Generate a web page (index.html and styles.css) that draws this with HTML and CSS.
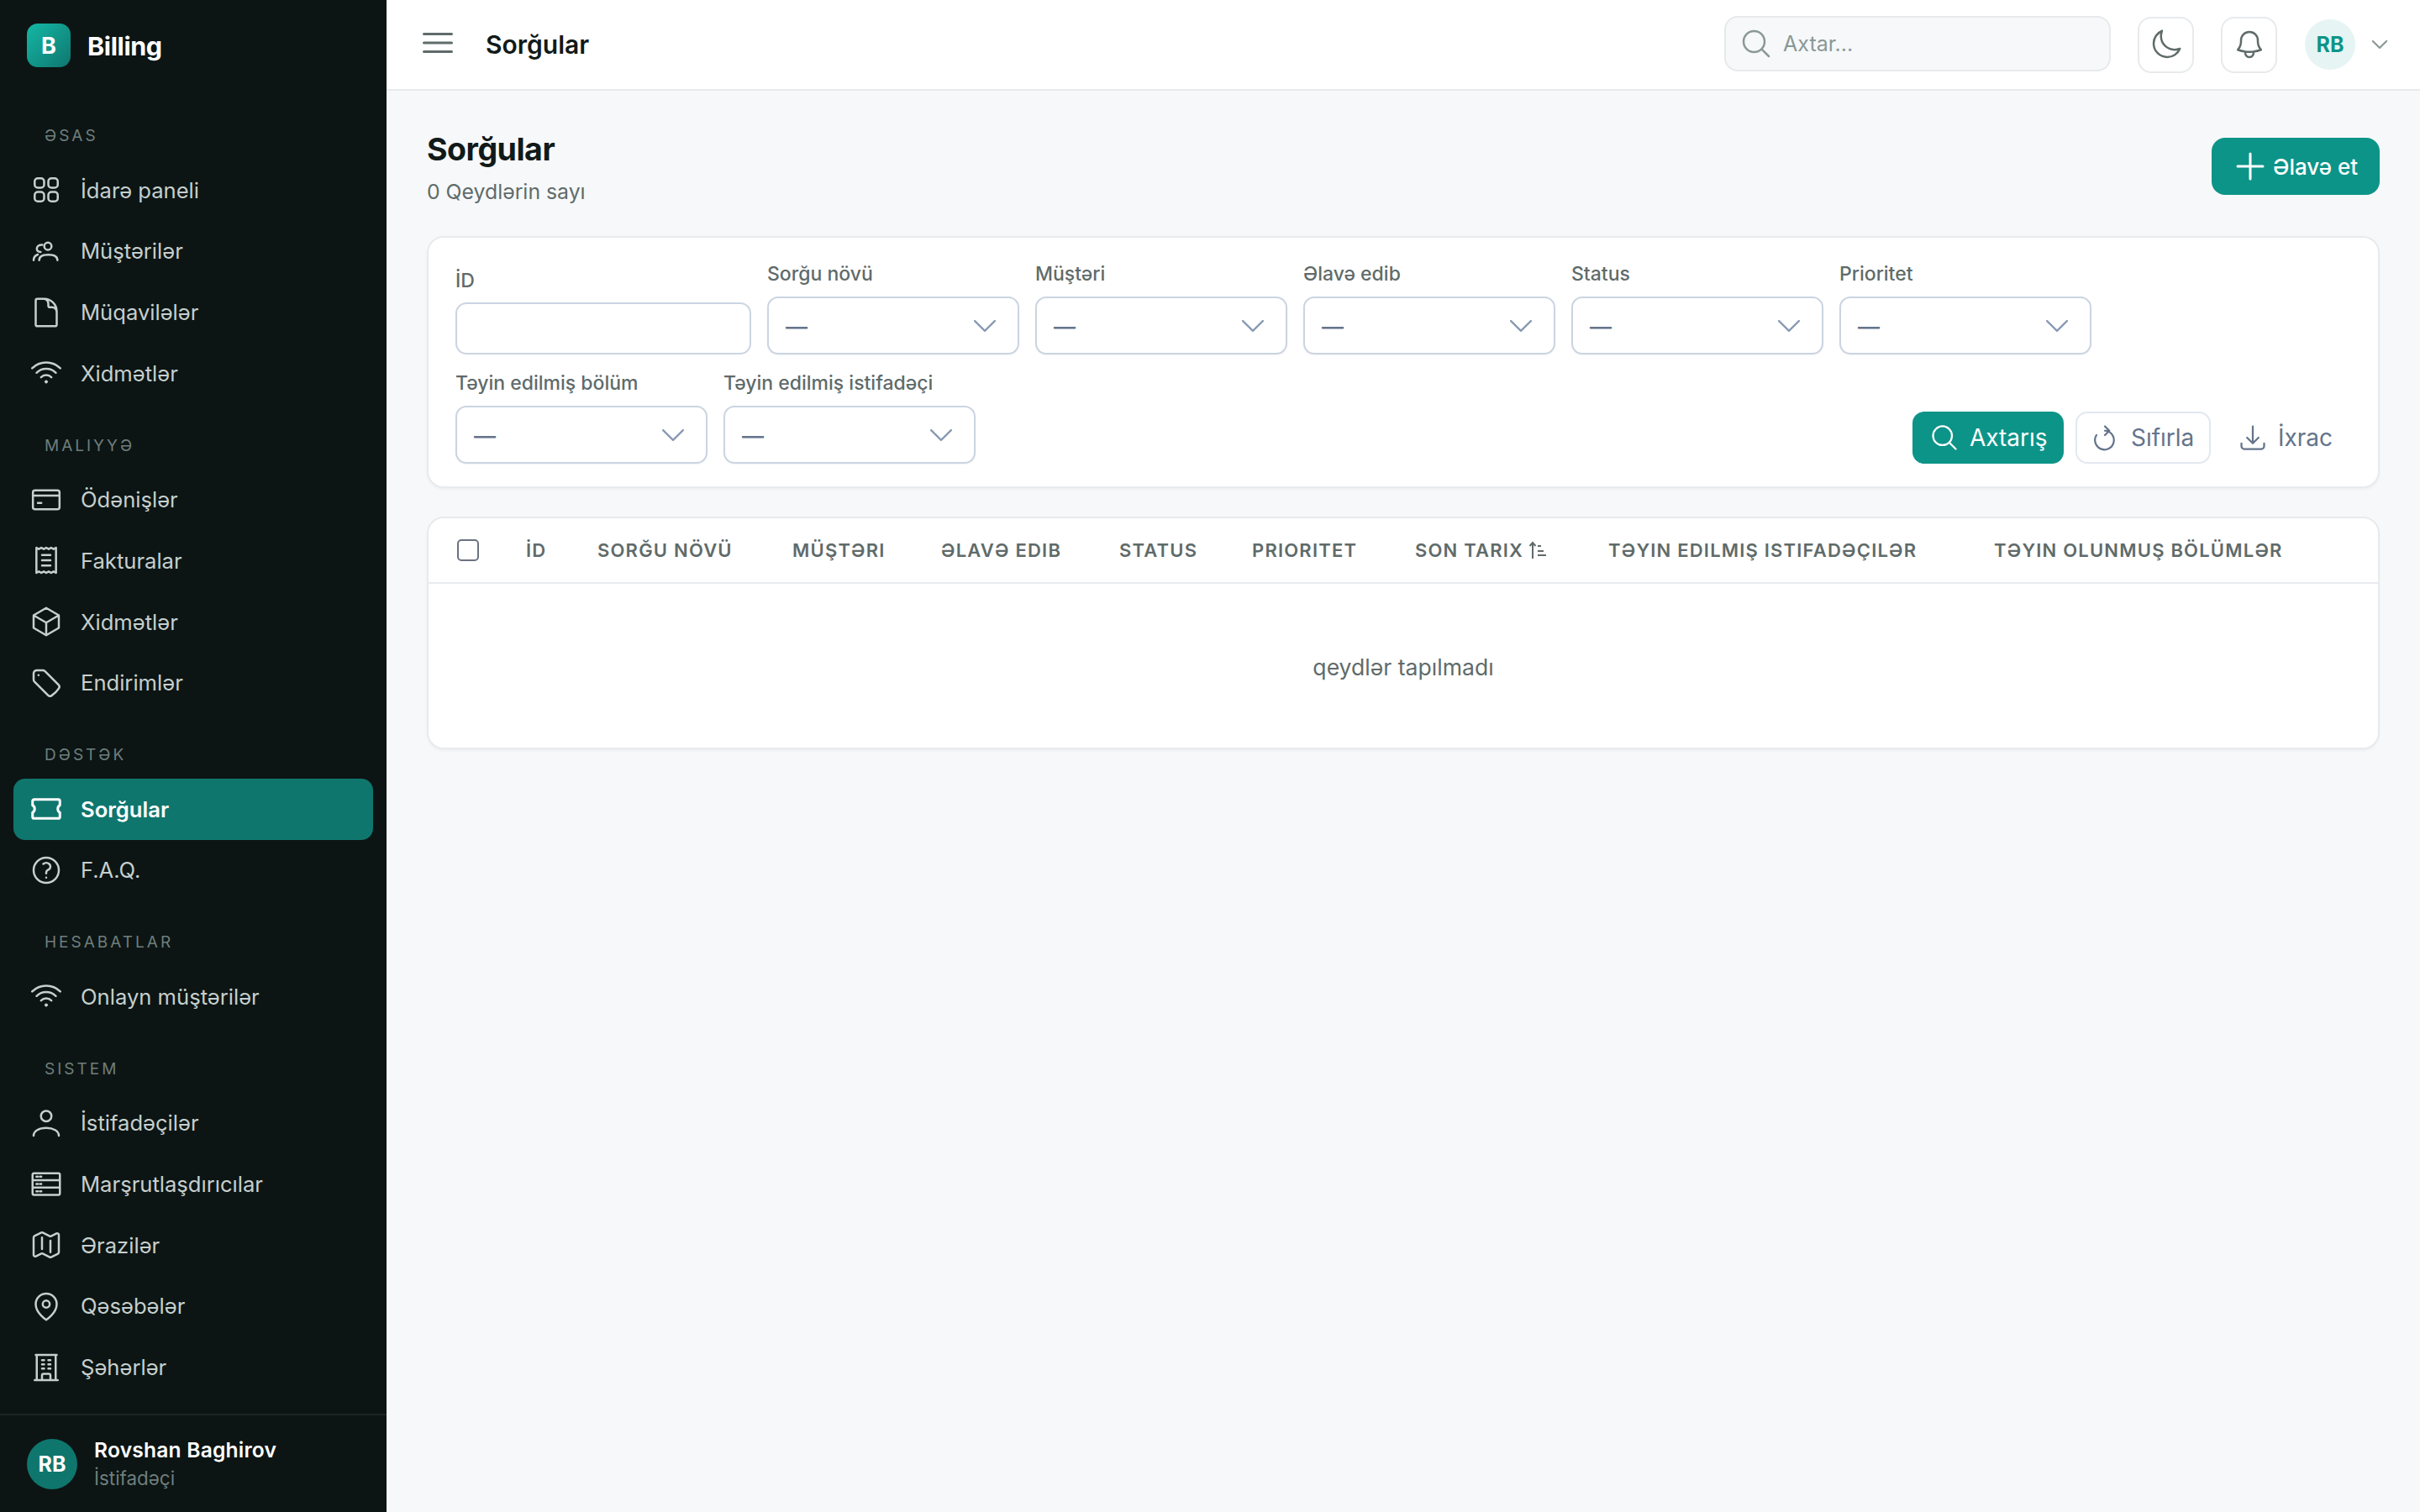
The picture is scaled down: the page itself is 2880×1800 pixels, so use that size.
FILE: index.html
```html
<!DOCTYPE html>
<html lang="az">
<head>
<meta charset="utf-8">
<title>Sorğular</title>
<link rel="stylesheet" href="styles.css">
</head>
<body>
<div class="app">
  <aside class="sidebar">
    <div class="brand"><span class="logo">B</span><span class="brand-name">Billing</span></div>
    <nav class="nav">
      <div class="nav-label">ƏSAS</div>
      <a class="nav-item"><svg class="ico" viewBox="0 0 24 24"><path d="M3.75 6A2.25 2.25 0 0 1 6 3.75h2.25A2.25 2.25 0 0 1 10.5 6v2.25a2.25 2.25 0 0 1-2.25 2.25H6a2.25 2.25 0 0 1-2.25-2.25V6ZM3.75 15.75A2.25 2.25 0 0 1 6 13.5h2.25a2.25 2.25 0 0 1 2.25 2.25V18a2.25 2.25 0 0 1-2.25 2.25H6A2.25 2.25 0 0 1 3.75 18v-2.25ZM13.5 6a2.25 2.25 0 0 1 2.25-2.25H18A2.25 2.25 0 0 1 20.25 6v2.25A2.25 2.25 0 0 1 18 10.5h-2.25a2.25 2.25 0 0 1-2.25-2.25V6ZM13.5 15.75a2.25 2.25 0 0 1 2.25-2.25H18a2.25 2.25 0 0 1 2.25 2.25V18A2.25 2.25 0 0 1 18 20.25h-2.25A2.25 2.25 0 0 1 13.5 18v-2.25Z"/></svg><span>İdarə paneli</span></a>
      <a class="nav-item"><svg class="ico" viewBox="0 0 24 24"><circle cx="13.200" cy="8.500" r="2.600"/><path d="M7 18.500c0-2.600 2.600-3.900 6.500-3.900s6.500 1.300 6.500 3.900"/><path d="M3 18.500c0-2 1-3.400 3-4.100"/><path d="M9.300 7.500C7 7.300 5.300 8.500 5.300 10.200c0 1.300 1.100 2.300 2.700 2.400"/></svg><span>Müştərilər</span></a>
      <a class="nav-item"><svg class="ico" viewBox="0 0 24 24"><path d="M19.5 14.250v-2.625a3.375 3.375 0 0 0-3.375-3.375h-1.500A1.125 1.125 0 0 1 13.500 7.125v-1.500a3.375 3.375 0 0 0-3.375-3.375H8.250m2.250 0H5.625c-.621 0-1.125.504-1.125 1.125v17.250c0 .621.504 1.125 1.125 1.125h12.750c.621 0 1.125-.504 1.125-1.125V11.250a9 9 0 0 0-9-9Z"/></svg><span>Müqavilələr</span></a>
      <a class="nav-item"><svg class="ico" viewBox="0 0 24 24"><path d="M8.288 15.038a5.250 5.250 0 0 1 7.424 0M5.106 11.856c3.807-3.808 9.980-3.808 13.788 0M1.924 8.674c5.565-5.565 14.587-5.565 20.152 0M12.530 18.220l-.530.530-.530-.530a.750.750 0 0 1 1.060 0Z"/></svg><span>Xidmətlər</span></a>

      <div class="nav-label">MALIYYƏ</div>
      <a class="nav-item"><svg class="ico" viewBox="0 0 24 24"><path d="M3 9h18m-15 5.250h2.500M4 18.750h16a1.500 1.500 0 0 0 1.500-1.500V6.750A1.500 1.500 0 0 0 20 5.250H4a1.500 1.500 0 0 0-1.500 1.500v10.500A1.500 1.500 0 0 0 4 18.750Z"/></svg><span>Ödənişlər</span></a>
      <a class="nav-item"><svg class="ico" viewBox="0 0 24 24"><path d="M5 3v18l1.750-1 1.750 1 1.750-1 1.750 1 1.750-1 1.750 1 1.750-1L19 21V3l-1.750 1-1.750-1-1.750 1L12 3l-1.750 1L8.500 3 6.750 4 5 3Z"/><path d="M9 8.250h6M9 12h6m-6 3.750h6"/></svg><span>Fakturalar</span></a>
      <a class="nav-item"><svg class="ico" viewBox="0 0 24 24"><path d="m21 7.500-9-5.250L3 7.500m18 0-9 5.250m9-5.250v9l-9 5.250M3 7.500l9 5.250M3 7.500v9l9 5.250m0-9v9"/></svg><span>Xidmətlər</span></a>
      <a class="nav-item"><svg class="ico" viewBox="0 0 24 24"><path d="M9.568 3H5.250A2.250 2.250 0 0 0 3 5.250v4.318c0 .597.237 1.170.659 1.591l9.581 9.581c.699.699 1.780.872 2.607.330a18.095 18.095 0 0 0 5.223-5.223c.542-.827.369-1.908-.330-2.607L11.160 3.660A2.250 2.250 0 0 0 9.568 3Z"/><path d="M6.500 6.500h.01v.01H6.500Z"/></svg><span>Endirimlər</span></a>

      <div class="nav-label">DƏSTƏK</div>
      <a class="nav-item is-active"><svg class="ico" viewBox="0 0 24 24"><path d="M3.375 5.250c-.621 0-1.125.504-1.125 1.125v3.026a2.999 2.999 0 0 1 0 5.198v3.026c0 .621.504 1.125 1.125 1.125h17.250c.621 0 1.125-.504 1.125-1.125v-3.026a2.999 2.999 0 0 1 0-5.198V6.375c0-.621-.504-1.125-1.125-1.125H3.375Z"/></svg><span>Sorğular</span></a>
      <a class="nav-item"><svg class="ico" viewBox="0 0 24 24"><path d="M9.879 7.519c1.171-1.025 3.071-1.025 4.242 0 1.172 1.025 1.172 2.687 0 3.712-.203.179-.430.326-.670.442-.745.361-1.450.999-1.450 1.827v.750M21 12a9 9 0 1 1-18 0 9 9 0 0 1 18 0Zm-9 5.250h.008v.008H12v-.008Z"/></svg><span>F.A.Q.</span></a>

      <div class="nav-label">HESABATLAR</div>
      <a class="nav-item"><svg class="ico" viewBox="0 0 24 24"><path d="M8.288 15.038a5.250 5.250 0 0 1 7.424 0M5.106 11.856c3.807-3.808 9.980-3.808 13.788 0M1.924 8.674c5.565-5.565 14.587-5.565 20.152 0M12.530 18.220l-.530.530-.530-.530a.750.750 0 0 1 1.060 0Z"/></svg><span>Onlayn müştərilər</span></a>

      <div class="nav-label">SISTEM</div>
      <a class="nav-item"><svg class="ico" viewBox="0 0 24 24"><circle cx="12" cy="7" r="3.750"/><path d="M3 21c0-3.500 4-5.500 9-5.500s9 2 9 5.500"/></svg><span>İstifadəçilər</span></a>
      <a class="nav-item"><svg class="ico" viewBox="0 0 24 24"><path d="M3.250 4h17.500c.550 0 1 .450 1 1v13.500c0 .550-.450 1-1 1H3.250c-.550 0-1-.450-1-1V5c0-.550.450-1 1-1ZM2.250 9h19.500M2.250 14.250h19.500"/><path d="M5 6.500h1m1.500 0h1M5 11.750h1m1.500 0h1M5 17h1m1.500 0h1"/></svg><span>Marşrutlaşdırıcılar</span></a>
      <a class="nav-item"><svg class="ico" viewBox="0 0 24 24"><path d="M9 6.750V15m6-6v8.250m.503 3.498 4.875-2.437c.381-.190.622-.580.622-1.006V4.820c0-.836-.880-1.380-1.628-1.006l-3.869 1.934c-.317.159-.690.159-1.006 0L9.503 3.252a1.125 1.125 0 0 0-1.006 0L3.622 5.689C3.240 5.880 3 6.270 3 6.695V19.180c0 .836.880 1.380 1.628 1.006l3.869-1.934c.317-.159.690-.159 1.006 0l4.994 2.497c.317.158.690.158 1.006 0Z"/></svg><span>Ərazilər</span></a>
      <a class="nav-item"><svg class="ico" viewBox="0 0 24 24"><path d="M14.500 10.500a2.500 2.500 0 1 1-5 0 2.500 2.500 0 0 1 5 0Z"/><path d="M19.500 10.500c0 6.500-7.500 11.250-7.500 11.250S4.500 17 4.500 10.500a7.500 7.500 0 1 1 15 0Z"/></svg><span>Qəsəbələr</span></a>
      <a class="nav-item"><svg class="ico" viewBox="0 0 24 24"><path d="M3.750 21h16.500M4.500 3h15M5.250 3v18m13.500-18v18M9 6.750h1.500m-1.500 3h1.500m-1.500 3h1.500m3-6H15m-1.500 3H15m-1.500 3H15M9 21v-3.375c0-.621.504-1.125 1.125-1.125h3.750c.621 0 1.125.504 1.125 1.125V21"/></svg><span>Şəhərlər</span></a>
    </nav>
    <div class="side-user">
      <span class="side-avatar">RB</span>
      <div class="side-user-text"><div class="side-user-name">Rovshan Baghirov</div><div class="side-user-role">İstifadəçi</div></div>
    </div>
  </aside>

  <div class="main">
    <header class="topbar">
      <svg class="menu-ico" viewBox="0 0 24 24"><path d="M3.750 6.750h16.500M3.750 12h16.500m-16.500 5.250h16.500"/></svg>
      <div class="top-title">Sorğular</div>
      <div class="top-search"><svg class="search-ico" viewBox="0 0 24 24"><path d="m21 21-5.197-5.197m0 0A7.500 7.500 0 1 0 5.196 5.196a7.500 7.500 0 0 0 10.607 10.607Z"/></svg><span>Axtar...</span></div>
      <button class="icon-btn"><svg class="top-ico" viewBox="0 0 24 24"><path d="M21.752 15.002A9.720 9.720 0 0 1 18 15.750c-5.385 0-9.750-4.365-9.750-9.750 0-1.330.266-2.597.748-3.752A9.753 9.753 0 0 0 3 11.250C3 16.635 7.365 21 12.750 21a9.753 9.753 0 0 0 9.002-5.998Z"/></svg></button>
      <button class="icon-btn"><svg class="top-ico" viewBox="0 0 24 24"><path d="M14.857 17.082a23.848 23.848 0 0 0 5.454-1.310A8.967 8.967 0 0 1 18 9.750V9A6 6 0 0 0 6 9v.750a8.967 8.967 0 0 1-2.312 6.022c1.733.640 3.560 1.085 5.455 1.310m5.714 0a24.255 24.255 0 0 1-5.714 0m5.714 0a3 3 0 1 1-5.714 0"/></svg></button>
      <span class="top-avatar">RB</span>
      <svg class="top-chevron" viewBox="0 0 24 24"><path d="m19.500 8.250-7.500 7.500-7.500-7.500"/></svg>
    </header>

    <main class="content">
      <div class="page-head">
        <div>
          <h1 class="page-title">Sorğular</h1>
          <div class="page-sub">0 Qeydlərin sayı</div>
        </div>
        <button class="btn-add"><svg class="plus-ico" viewBox="0 0 24 24"><path d="M12 4.500v15m7.500-7.500h-15"/></svg><span>Əlavə et</span></button>
      </div>

      <section class="card filters">
        <div class="filter-row">
          <div class="field field-id"><label class="field-label label-id">İD</label><div class="input"></div></div>
          <div class="field"><label class="field-label">Sorğu növü</label><div class="select"><span>—</span><svg class="sel-chev" viewBox="0 0 24 24"><path d="m19.500 8.250-7.500 7.500-7.500-7.500"/></svg></div></div>
          <div class="field"><label class="field-label">Müştəri</label><div class="select"><span>—</span><svg class="sel-chev" viewBox="0 0 24 24"><path d="m19.500 8.250-7.500 7.500-7.500-7.500"/></svg></div></div>
          <div class="field"><label class="field-label">Əlavə edib</label><div class="select"><span>—</span><svg class="sel-chev" viewBox="0 0 24 24"><path d="m19.500 8.250-7.500 7.500-7.500-7.500"/></svg></div></div>
          <div class="field"><label class="field-label">Status</label><div class="select"><span>—</span><svg class="sel-chev" viewBox="0 0 24 24"><path d="m19.500 8.250-7.500 7.500-7.500-7.500"/></svg></div></div>
          <div class="field"><label class="field-label">Prioritet</label><div class="select"><span>—</span><svg class="sel-chev" viewBox="0 0 24 24"><path d="m19.500 8.250-7.500 7.500-7.500-7.500"/></svg></div></div>
        </div>
        <div class="filter-row">
          <div class="field"><label class="field-label">Təyin edilmiş bölüm</label><div class="select"><span>—</span><svg class="sel-chev" viewBox="0 0 24 24"><path d="m19.500 8.250-7.500 7.500-7.500-7.500"/></svg></div></div>
          <div class="field"><label class="field-label">Təyin edilmiş istifadəçi</label><div class="select"><span>—</span><svg class="sel-chev" viewBox="0 0 24 24"><path d="m19.500 8.250-7.500 7.500-7.500-7.500"/></svg></div></div>
          <div class="actions">
            <button class="btn btn-primary"><svg class="btn-ico" viewBox="0 0 24 24"><path d="m21 21-5.197-5.197m0 0A7.500 7.500 0 1 0 5.196 5.196a7.500 7.500 0 0 0 10.607 10.607Z"/></svg><span>Axtarış</span></button>
            <button class="btn btn-outline"><svg class="btn-ico" viewBox="0 0 24 24"><path d="M12 3l3.500 3.500L12 10"/><path d="M15 6.500h-3A7.500 7.500 0 1 1 5.300 10"/></svg><span>Sıfırla</span></button>
            <button class="btn btn-ghost"><svg class="btn-ico" viewBox="0 0 24 24"><path d="M3 16.500v2.250A2.250 2.250 0 0 0 5.250 21h13.500A2.250 2.250 0 0 0 21 18.750V16.500M16.500 12 12 16.500m0 0L7.500 12m4.500 4.500V3"/></svg><span>İxrac</span></button>
          </div>
        </div>
      </section>

      <section class="card table-card">
        <div class="thead">
          <div class="th"><span class="checkbox"></span></div>
          <div class="th">İD</div>
          <div class="th">SORĞU NÖVÜ</div>
          <div class="th">MÜŞTƏRI</div>
          <div class="th">ƏLAVƏ EDIB</div>
          <div class="th">STATUS</div>
          <div class="th">PRIORITET</div>
          <div class="th">SON TARIX<svg class="sort-ico" viewBox="0 0 22 22"><path d="M5 21V2M1.500 6 5 2l3.500 4"/><path d="M11 6h4M11 12h7M11 17h10"/></svg></div>
          <div class="th">TƏYIN EDILMIŞ ISTIFADƏÇILƏR</div>
          <div class="th">TƏYIN OLUNMUŞ BÖLÜMLƏR</div>
        </div>
        <div class="empty">qeydlər tapılmadı</div>
      </section>
    </main>
  </div>
</div>
</body>
</html>
```
FILE: styles.css
```css
* { box-sizing: border-box; }
html, body { margin: 0; height: 100%; }
body { font-family: Inter, "Noto Sans", "Liberation Sans", sans-serif; background: #f6f8fa; color: #111a19; }
svg { fill: none; stroke: currentColor; stroke-width: 1.5; stroke-linecap: round; stroke-linejoin: round; display: block; flex: none; }
button { font-family: inherit; cursor: pointer; }

.app { display: flex; height: 1800px; overflow: hidden; }

.sidebar { width: 460px; flex: none; background: #0c1514; display: flex; flex-direction: column; }
.brand { display: flex; align-items: center; gap: 20px; height: 112px; padding: 0 32px 4px; }
.brand .logo { width: 52px; height: 52px; border-radius: 13px; background: linear-gradient(135deg, #14b8a6, #0f766e); color: #fff; font-size: 27px; font-weight: 700; display: flex; align-items: center; justify-content: center; }
.brand-name { color: #fff; font-size: 30.5px; font-weight: 700; letter-spacing: -0.4px; }

.nav { flex: 1; padding: 0 16px; }
.nav-label { height: 24px; margin: 38px 0 15.800px; padding-left: 37px; font-size: 19px; line-height: 24px; letter-spacing: 3px; color: #6f7e7c; }
.nav-item { display: flex; align-items: center; gap: 21px; height: 72.7px; padding-left: 19px; border-radius: 14px; color: #c6cfcd; font-size: 25.6px; }
.nav-item .ico { width: 40px; height: 40px; }
.nav-item.is-active { background: #0f766e; color: #fff; font-weight: 600; }
.nav-item.is-active .ico { stroke-width: 1.8; }

.side-user { height: 117px; border-top: 2px solid #1c2423; display: flex; align-items: center; gap: 20px; padding: 0 32px; }
.side-avatar { width: 60px; height: 60px; border-radius: 50%; background: #0f766e; color: #fff; font-size: 25px; font-weight: 700; display: flex; align-items: center; justify-content: center; }
.side-user-name { color: #fff; font-size: 24.6px; font-weight: 600; line-height: 34px; letter-spacing: .2px; }
.side-user-role { color: #6f7e7c; font-size: 22.4px; line-height: 34px; }

.main { flex: 1; min-width: 0; display: flex; flex-direction: column; }

.topbar { height: 108px; flex: none; background: #fff; border-bottom: 2px solid #e7eaec; display: flex; align-items: center; padding: 0 35px 0 37px; }
.menu-ico { width: 48px; height: 48px; color: #5f6b6a; margin-bottom: 4px; }
.top-title { font-size: 30px; font-weight: 600; margin-left: 33px; color: #111a19; margin-right: auto; margin-bottom: 1px; }
.top-search { width: 460px; height: 66px; border: 2px solid #e7eaec; border-radius: 16px; background: #f6f8fa; display: flex; align-items: center; gap: 12px; padding-left: 16px; color: #8b9896; font-size: 25px; margin-bottom: 2px; }
.search-ico { width: 40px; height: 40px; }
.icon-btn { width: 67px; height: 67px; border: 2px solid #e7eaec; border-radius: 16px; background: #fff; color: #5f6b6a; display: flex; align-items: center; justify-content: center; padding: 0; margin-left: 32px; }
.top-ico { width: 40px; height: 40px; }
.top-avatar { width: 60px; height: 60px; border-radius: 50%; background: #e6f4f3; color: #0d9488; font-size: 25px; font-weight: 700; display: flex; align-items: center; justify-content: center; margin-left: 33px; }
.top-chevron { width: 26px; height: 26px; color: #8b9896; margin-left: 16px; stroke-width: 2; }

.content { flex: 1; padding: 56px 48px 0; display: flex; flex-direction: column; }

.page-head { display: flex; justify-content: space-between; align-items: flex-start; height: 117px; }
.page-title { margin: -11px 0 0; font-size: 37.5px; font-weight: 700; line-height: 50px; letter-spacing: -0.5px; color: #111a19; }
.page-sub { font-size: 24.8px; line-height: 34px; margin-top: 8px; color: #5f6b6a; }
.btn-add { width: 200px; height: 68px; border: 0; border-radius: 16px; background: #0d9488; color: #fff; font-size: 26px; font-weight: 500; display: flex; align-items: center; justify-content: flex-start; gap: 3px; padding: 0 0 0 22px; }
.plus-ico { width: 48px; height: 48px; }

.card { background: #fff; border: 2px solid #e8ebee; border-radius: 20px; box-shadow: 0 2px 3px rgba(16, 24, 40, .04); }

.filters { height: 300px; display: flex; flex-direction: column; gap: 19px; padding: 28px 32px 0; }
.filter-row { display: flex; align-items: flex-end; gap: 19px; }
.field { display: flex; flex-direction: column; width: 300px; }
.field-id { width: 352px; justify-content: flex-end; }
.field-label { font-size: 23px; font-weight: 500; line-height: 30px; color: #5f6b6a; margin-bottom: 12px; white-space: nowrap; }
.label-id { margin-bottom: 11px; }
.input { height: 62px; border: 2px solid #cbd5e1; border-radius: 13px; background: #fff; }
.select { height: 69px; border: 2px solid #cbd5e1; border-radius: 13px; background: #fff; display: flex; align-items: center; justify-content: space-between; padding: 0 20px 0 20px; color: #64748b; font-size: 26px; font-weight: 500; box-shadow: 0 1px 2px rgba(16, 24, 40, .05); }
.select span { position: relative; top: 1px; }
.sel-chev { width: 38px; height: 38px; color: #8a9ab3; }

.actions { margin-left: auto; display: flex; align-items: center; gap: 14px; margin-bottom: 0; }
.btn { height: 62px; border-radius: 14px; font-size: 28px; display: flex; align-items: center; gap: 12px; padding: 0 22px 0 20px; background: none; border: 0; color: #64748b; }
.btn-ico { width: 36px; height: 36px; }
.btn-primary { background: #0d9488; color: #fff; width: 180px; }
.btn-outline { border: 2px solid #e2e8f0; background: #fff; width: 161px; padding-left: 15px; gap: 13px; }
.btn-ghost { margin-left: -2px; }

.table-card { margin-top: 34px; height: 277px; }
.thead { display: grid; grid-template-columns: 82px 85px 232px 177px 212px 158px 194px 230px 459px 1fr; align-items: center; height: 78px; padding-left: 34px; padding-bottom: 1px; border-bottom: 2px solid #e8ebee; }
.th { font-size: 22px; font-weight: 600; letter-spacing: 1.2px; color: #5f6b6a; white-space: nowrap; display: flex; align-items: center; }
.checkbox { width: 26px; height: 26px; border: 2px solid #6b7280; border-radius: 5px; background: #fff; }
.sort-ico { width: 22px; height: 22px; margin-left: 6px; stroke-width: 2; stroke-linecap: butt; stroke-linejoin: miter; }
.empty { height: 196px; display: flex; align-items: center; justify-content: center; font-size: 26.6px; color: #5f6b6a; padding-top: 2px; }
```
